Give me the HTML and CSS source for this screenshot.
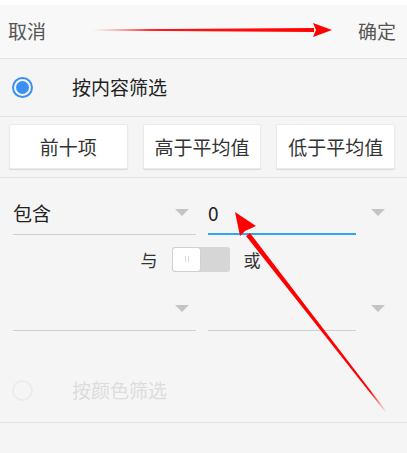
FILE: index.html
```html
<!DOCTYPE html>
<html>
<head>
    <title>筛选</title>
    <link rel="stylesheet" href="styles.css">
</head>
<body>
    <div class="page">
        <div class="status"></div>

        <div class="header">
            <span class="header-btn">取消</span>
            <span class="header-btn">确定</span>
        </div>

        <div class="option">
            <span class="radio checked"></span>
            <span class="option-label">按内容筛选</span>
        </div>

        <div class="quick">
            <button class="quick-btn">前十项</button>
            <button class="quick-btn">高于平均值</button>
            <button class="quick-btn">低于平均值</button>
        </div>

        <div class="conditions">
            <div class="cond-row">
                <div class="field">
                    <span class="field-text">包含</span>
                    <span class="caret"></span>
                </div>
                <div class="field active">
                    <span class="field-text">0</span>
                    <span class="caret outside"></span>
                </div>
            </div>

            <div class="logic">
                <span class="logic-label">与</span>
                <span class="switch"><span class="switch-thumb"></span></span>
                <span class="logic-label">或</span>
            </div>

            <div class="cond-row">
                <div class="field">
                    <span class="field-text"></span>
                    <span class="caret"></span>
                </div>
                <div class="field">
                    <span class="field-text"></span>
                    <span class="caret outside"></span>
                </div>
            </div>
        </div>

        <div class="option disabled">
            <span class="radio"></span>
            <span class="option-label">按颜色筛选</span>
        </div>

        <!-- annotation arrows drawn over the screenshot -->
        <svg class="arrows" width="407" height="453" viewBox="0 0 407 453">
            <defs>
                <linearGradient id="fadeH" x1="92" y1="0" x2="320" y2="0" gradientUnits="userSpaceOnUse">
                    <stop offset="0" stop-color="#ff0000" stop-opacity="0"/>
                    <stop offset="0.25" stop-color="#ff0000" stop-opacity="0.9"/>
                    <stop offset="1" stop-color="#ff0000"/>
                </linearGradient>
                <linearGradient id="fadeD" x1="387" y1="412" x2="245" y2="225" gradientUnits="userSpaceOnUse">
                    <stop offset="0" stop-color="#ff0000" stop-opacity="0"/>
                    <stop offset="0.12" stop-color="#ff0000"/>
                    <stop offset="1" stop-color="#ff0000"/>
                </linearGradient>
            </defs>
            <polygon points="92,29.5 314,28 314,32 92,30.5" fill="url(#fadeH)"/>
            <polygon points="313,23 332,30 313,37 316,30" fill="#ff0000"/>
            <polygon points="387,412 250,233 246,236 386,413" fill="url(#fadeD)"/>
            <polygon points="235,212 256,226 245,231 240,236" fill="#ff0000"/>
        </svg>
    </div>
</body>
</html>
```

FILE: styles.css
```css
body {
    margin: 0;
    background: #f5f5f5;
    font-family: "Noto Sans CJK SC", "Noto Sans", sans-serif;
}

.page {
    position: relative;
    width: 407px;
    height: 453px;
    overflow: hidden;
}

.status {
    height: 5px;
    background: #ffffff;
}

.header {
    height: 51px;
    padding: 0 11px 2px 8px;
    display: flex;
    justify-content: space-between;
    align-items: center;
    background: #f8f8f8;
    border-bottom: 1px solid #e3e3e3;
}

.header-btn {
    font-size: 19px;
    color: #555555;
}

.option {
    height: 54px;
    padding: 0 0 3px 12px;
    display: flex;
    align-items: center;
    border-bottom: 1px solid #e3e3e3;
}

.radio {
    width: 17px;
    height: 17px;
    border: 2px solid #e8e8e8;
    border-radius: 50%;
    box-sizing: content-box;
    position: relative;
    margin-top: 3px;
}

.radio.checked {
    border-color: #3b8ff2;
}

.radio.checked::after {
    content: "";
    position: absolute;
    left: 2px;
    top: 2px;
    width: 13px;
    height: 13px;
    border-radius: 50%;
    background: #3b8ff2;
}

.option-label {
    margin-left: 39px;
    font-size: 19px;
    color: #222222;
}

.option.disabled {
    height: 60px;
    margin-top: 28px;
}

.option.disabled .radio {
    border-color: #ececec;
}

.option.disabled .option-label {
    color: #dcdcdc;
}

.quick {
    display: flex;
    gap: 15px;
    padding: 7px 12px 8px 9px;
    border-bottom: 1px solid #e3e3e3;
}

.quick-btn {
    flex: 1;
    height: 45px;
    background: #ffffff;
    border: 1px solid #ebebeb;
    border-radius: 2px;
    box-shadow: 0 1px 1px rgba(0, 0, 0, 0.12);
    font-family: inherit;
    font-size: 19px;
    color: #333333;
    padding: 0;
}

.conditions {
    padding: 16px 0 0 13px;
}

.cond-row {
    display: flex;
    gap: 12px;
}

.field {
    position: relative;
    display: flex;
    align-items: center;
    justify-content: space-between;
    height: 37px;
    padding-bottom: 3px;
    border-bottom: 1px solid #cfcfcf;
}

.cond-row .field:first-child {
    width: 183px;
}

.cond-row .field:last-child {
    width: 148px;
}

.field.active {
    border-bottom: 2px solid #2fa8f2;
    height: 36px;
}

.field-text {
    font-size: 19px;
    color: #222222;
}

.caret {
    width: 0;
    height: 0;
    border-left: 7px solid transparent;
    border-right: 7px solid transparent;
    border-top: 7px solid #c4c4c4;
    margin-right: 7px;
}

.caret.outside {
    position: absolute;
    right: -29px;
    margin-right: 0;
}

.logic {
    display: flex;
    align-items: center;
    justify-content: center;
    gap: 14px;
    height: 36px;
    margin: 6px 0 13px -13px;
    padding-right: 6px;
}

.logic-label {
    font-size: 17px;
    color: #333333;
}

.switch {
    width: 58px;
    height: 25px;
    background: #d6d6d6;
    border-radius: 3px;
    display: flex;
    align-items: center;
    padding: 1px;
    box-sizing: border-box;
}

.switch-thumb {
    position: relative;
    width: 27px;
    height: 23px;
    background: #ffffff;
    border-radius: 2px;
    box-shadow: 0 0 1px rgba(0, 0, 0, 0.25);
}

.switch-thumb::after {
    content: "";
    position: absolute;
    left: 12px;
    top: 8px;
    width: 2px;
    height: 6px;
    border-left: 1px solid #dddddd;
    border-right: 1px solid #dddddd;
}

.arrows {
    position: absolute;
    left: 0;
    top: 0;
    pointer-events: none;
}
```
